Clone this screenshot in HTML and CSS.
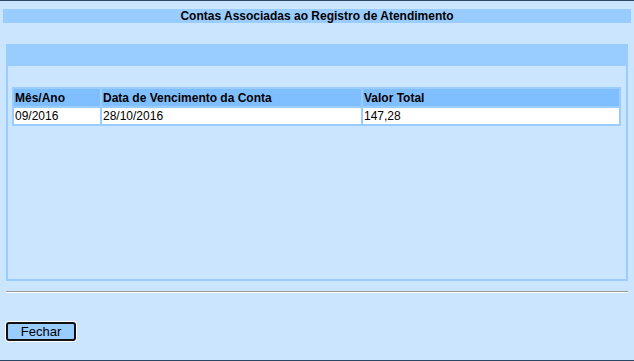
FILE: index.html
```html
<!DOCTYPE html>
<html lang="pt-BR">
<head>
  <meta charset="UTF-8">
  <title>Contas Associadas ao Registro de Atendimento</title>
  <link rel="stylesheet" href="styles.css">
</head>
<body>

<div class="page">
  <div class="title">Contas Associadas ao Registro de Atendimento</div>

  <div class="panel">
    <div class="panel-head"></div>
    <table class="grid">
      <tr>
        <th class="c1">Mês/Ano</th>
        <th class="c2">Data de Vencimento da Conta</th>
        <th>Valor Total</th>
      </tr>
      <tr>
        <td>09/2016</td>
        <td>28/10/2016</td>
        <td>147,28</td>
      </tr>
    </table>
  </div>

  <hr class="sep">

  <button class="btn" type="button">Fechar</button>
</div>

</body>
</html>
```

FILE: styles.css
```css
body { margin: 0; background: #cce5ff; font-family: "Liberation Sans", Arial, sans-serif; font-size: 12px; color: #000; }
.page {
  height: 361px;
  box-sizing: border-box;
  border-top: 1px solid #2a4866;
  border-bottom: 1px solid #2a4866;
  padding-top: 8px;
}
.title {
  margin: 0 3px;
  height: 14px;
  line-height: 14px;
  background: #99ccff;
  text-align: center;
  font-weight: bold;
}
.panel {
  margin: 21px 0 0 6px;
  width: 622px;
  height: 237px;
  box-sizing: border-box;
  border: 2px solid #99ccff;
}
.panel-head { height: 20px; background: #99ccff; }
.grid {
  margin: 21px 0 0 4px;
  width: 609px;
  border-spacing: 2px;
  background: #99ccff;
}
.grid th, .grid td { text-align: left; padding: 0 1px; }
.grid th { background: #80bfff; height: 17px; }
.grid td { background: #fff; height: 16px; }
.grid .c1 { width: 84px; }
.grid .c2 { width: 257px; }
.sep {
  margin: 10px 0 0 6px;
  width: 622px;
  height: 0;
  border: 0;
  border-top: 1px solid #999;
  border-bottom: 1px solid #fff;
}
.btn {
  display: block;
  margin: 29px 0 0 6px;
  width: 70px;
  height: 19px;
  padding: 0;
  background: #99ccff;
  border: 2px solid #111;
  border-radius: 3px;
  box-shadow: 0 0 0 1px #fff;
  font-family: "Liberation Sans", Arial, sans-serif;
  font-size: 13px;
  line-height: 14px;
  color: #000;
}
```
